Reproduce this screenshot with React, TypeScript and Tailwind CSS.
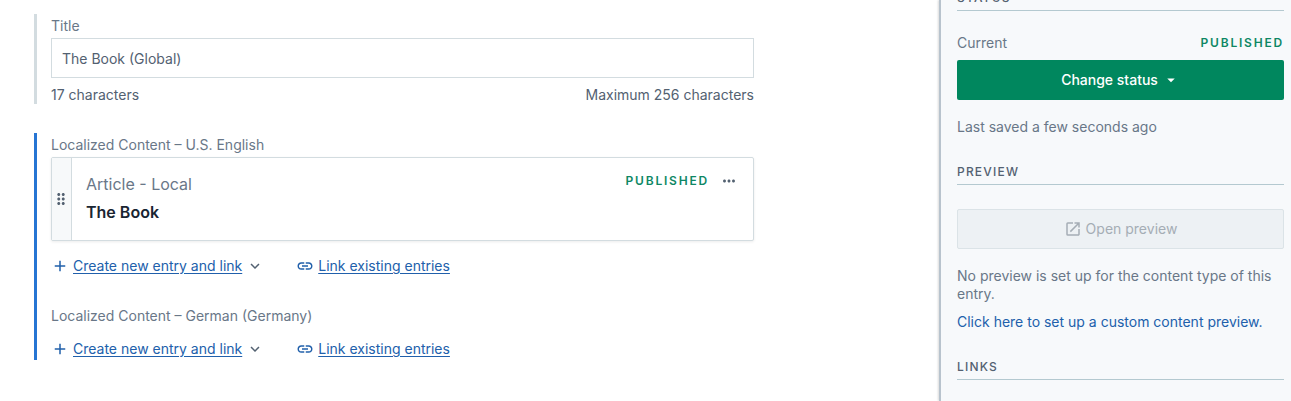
import { useState } from "react";
import {
  MdAdd,
  MdArrowDropDown,
  MdDragIndicator,
  MdKeyboardArrowDown,
  MdLink,
  MdMoreHoriz,
  MdOpenInNew,
} from "react-icons/md";

function SectionHeading({ children }: { children: string }) {
  return (
    <h2 className="border-b border-[#b4c9d0] pb-0.5 text-xs leading-5 font-medium tracking-[1.2px] text-[#536171] uppercase">
      {children}
    </h2>
  );
}

function PublishedTag() {
  return (
    <span className="text-xs leading-[18px] font-semibold tracking-[1.8px] text-[#0e8764]">
      PUBLISHED
    </span>
  );
}

function LinkActions() {
  return (
    <div className="flex h-[22px] items-center text-[#2160ab]">
      <a href="#create" className="flex items-center gap-1">
        <MdAdd className="size-[18px]" />
        <span className="underline underline-offset-2">Create new entry and link</span>
      </a>
      <button type="button" aria-label="More content types" className="ml-1 text-[#536171]">
        <MdKeyboardArrowDown className="size-[18px]" />
      </button>
      <a href="#link" className="ml-8 flex items-center gap-1">
        <MdLink className="size-[18px]" />
        <span className="underline underline-offset-2">Link existing entries</span>
      </a>
    </div>
  );
}

function EntryCard() {
  return (
    <article className="flex rounded-xs border border-[#d3dce0] bg-white shadow-[0_1px_3px_rgba(0,0,0,0.08)]">
      <button
        type="button"
        aria-label="Reorder entry"
        className="flex w-5 shrink-0 items-center justify-center border-r border-[#d3dce0] bg-[#f7f9fa] pr-px text-[#536171]"
      >
        <MdDragIndicator className="size-[18px] shrink-0" />
      </button>
      <div className="flex min-w-0 flex-1 justify-between pt-3 pr-[15px] pb-3.5 pl-3.5">
        <div className="text-base leading-7">
          <p>Article - Local</p>
          <h3 className="font-semibold text-[#192532]">The Book</h3>
        </div>
        <div className="flex h-[22px] items-center gap-[11px]">
          <PublishedTag />
          <button type="button" aria-label="Entry actions" className="text-[#536171]">
            <MdMoreHoriz className="size-[18px]" />
          </button>
        </div>
      </div>
    </article>
  );
}

export default function App() {
  const [title, setTitle] = useState("The Book (Global)");

  return (
    <div className="flex min-h-screen overflow-hidden bg-white font-['Inter',sans-serif] text-sm leading-[18px] text-[#697788]">
      <main className="min-w-0 flex-1 pt-3.5 pr-6 pl-[34px]">
        <div className="max-w-[720px]">
          <section className="border-l-3 border-[#d3dce0] pl-3.5">
            <label htmlFor="title" className="flex h-6 items-center">
              Title
            </label>
            <input
              id="title"
              type="text"
              maxLength={256}
              value={title}
              onChange={(event) => setTitle(event.target.value)}
              className="block h-10 w-full border border-[#d3dce0] bg-white px-2.5 text-[#536171] outline-none"
            />
            <div className="mt-2 flex justify-between text-[#536171]">
              <span>{title.length} characters</span>
              <span>Maximum 256 characters</span>
            </div>
          </section>

          <section className="mt-[29px] border-l-3 border-[#2675d3] pl-3.5">
            <h2 className="flex h-6 items-center">Localized Content – U.S. English</h2>
            <EntryCard />
            <div className="pt-3.5">
              <LinkActions />
            </div>
            <h2 className="mt-[27px] flex h-6 items-center">
              Localized Content – German (Germany)
            </h2>
            <div className="pt-2.5">
              <LinkActions />
            </div>
          </section>
        </div>
      </main>

      <aside className="w-[352px] shrink-0 border-l-2 border-[#b8c3cd] bg-[#f7f9fb] pr-[7px] pl-4 shadow-[-1px_0_2px_rgba(0,0,0,0.15)]">
        <section className="-mt-3">
          <SectionHeading>Status</SectionHeading>
          <div className="mt-[23px] flex items-center justify-between">
            <span>Current</span>
            <PublishedTag />
          </div>
          <button
            type="button"
            className="mt-2 flex h-10 w-full items-center justify-center gap-1 rounded-xs bg-[#00875e] font-medium text-white"
          >
            Change status
            <MdArrowDropDown className="size-[18px]" />
          </button>
          <p className="mt-[18px]">Last saved a few seconds ago</p>
        </section>

        <section className="mt-[26px]">
          <SectionHeading>Preview</SectionHeading>
          <button
            type="button"
            disabled
            className="mt-6 flex h-10 w-full items-center justify-center gap-1 rounded-xs border border-[#dbe3e7] bg-[#edf1f4] text-[#a5adb5]"
          >
            <MdOpenInNew className="size-[18px]" />
            Open preview
          </button>
          <p className="mt-[18px]">No preview is set up for the content type of this entry.</p>
          <a href="#preview" className="mt-2.5 block text-[#2160ab]">
            Click here to set up a custom content preview.
          </a>
        </section>

        <section className="mt-[26px]">
          <SectionHeading>Links</SectionHeading>
        </section>
      </aside>
    </div>
  );
}
